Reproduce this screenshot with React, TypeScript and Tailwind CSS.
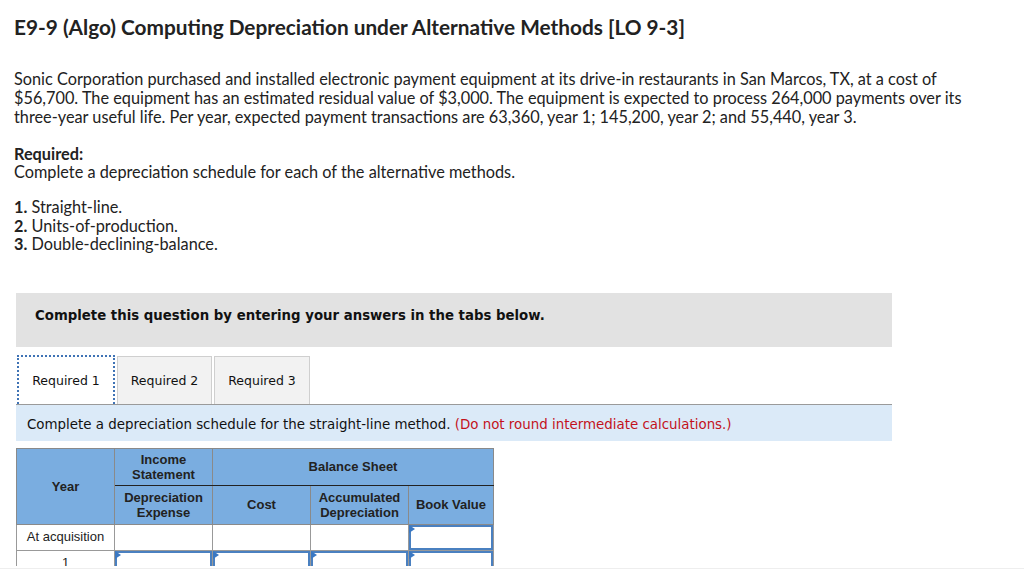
import React from "react";

const Tri = () => (
  <span className="absolute left-0 top-0 w-0 h-0 border-t-[4px] border-b-[4px] border-l-[6px] border-t-transparent border-b-transparent border-l-[#3a78c3]" />
);

const InputCell = () => (
  <td className="relative border border-[#999] p-0 h-[26px]">
    <div className="absolute inset-0 border-2 border-[#4a80c0]"></div>
    <Tri />
  </td>
);

export default function App() {
  const sans = { fontFamily: "Lato, 'Open Sans', sans-serif" };
  return (
    <div className="w-[1024px] h-[579px] bg-white overflow-hidden">
      <div className="h-[566px] overflow-hidden">
        <div className="pl-[14px] pt-[15px] text-[#222]" style={sans}>
          <h1 className="text-[20.8px] leading-[24px] font-bold text-[#222]">
            E9-9 (Algo) Computing Depreciation under Alternative Methods [LO 9-3]
          </h1>
          <p className="mt-[30px] text-[16.3px] leading-[19px] w-[972px]">
            Sonic Corporation purchased and installed electronic payment equipment at its drive-in restaurants in San Marcos, TX, at a cost of $56,700. The equipment has an estimated residual value of $3,000. The equipment is expected to process 264,000 payments over its three-year useful life. Per year, expected payment transactions are 63,360, year 1; 145,200, year 2; and 55,440, year 3.
          </p>
          <div className="mt-[19px] text-[16.3px] leading-[18px]">
            <div className="font-bold">Required:</div>
            <div>Complete a depreciation schedule for each of the alternative methods.</div>
          </div>
          <ol className="mt-[17px] text-[16.3px] leading-[18.5px]">
            <li><b>1.</b> Straight-line.</li>
            <li><b>2.</b> Units-of-production.</li>
            <li><b>3.</b> Double-declining-balance.</li>
          </ol>
        </div>

        <div className="ml-[16px] w-[876px] mt-[39px]" style={{ fontFamily: "'DejaVu Sans', Verdana, sans-serif" }}>
          <div className="h-[54px] bg-[#e2e2e2] pl-[19px] pt-[14px] text-[13.3px] leading-[18px] font-bold text-[#111]">
            Complete this question by entering your answers in the tabs below.
          </div>
          <div className="mt-[8px] flex items-end gap-[2px] pl-[1px]">
            <div className="h-[49px] w-[98px] bg-white border-2 border-dotted border-[#3f73b5] border-b-0 flex items-center justify-center pt-[2px] text-[12.5px] text-[#111]">
              Required 1
            </div>
            <div className="h-[48px] w-[95px] bg-[#f2f2f2] border border-[#cfcfcf] border-b-0 flex items-center justify-center pt-[2px] text-[12.5px] text-[#111]">
              Required 2
            </div>
            <div className="h-[48px] w-[96px] bg-[#f2f2f2] border border-[#cfcfcf] border-b-0 flex items-center justify-center pt-[2px] text-[12.5px] text-[#111]">
              Required 3
            </div>
          </div>
          <div className="h-[37px] bg-[#dbeaf8] border-t border-[#9a9a9a] pl-[11px] pt-[6px] flex items-center text-[13.4px] text-[#111]">
            <span>Complete a depreciation schedule for the straight-line method.&nbsp;</span>
            <span className="text-[#c3121c]">(Do not round intermediate calculations.)</span>
          </div>

          <table
            className="mt-[7px] border-collapse text-[13px] text-[#222]"
            style={{ fontFamily: "'Liberation Sans', Arial, sans-serif" }}
          >
            <colgroup>
              <col className="w-[98px]" />
              <col className="w-[98px]" />
              <col className="w-[98px]" />
              <col className="w-[98px]" />
              <col className="w-[85px]" />
            </colgroup>
            <thead>
              <tr className="h-[37px] bg-[#7aade0] font-bold">
                <th rowSpan={2} className="border border-[#8a8a8a] leading-[15px]">Year</th>
                <th className="border border-[#8a8a8a] border-b-[#222] leading-[15px] pt-[1px]">Income<br />Statement</th>
                <th colSpan={3} className="border border-[#8a8a8a] border-b-[#222] leading-[15px]">Balance Sheet</th>
              </tr>
              <tr className="h-[39px] bg-[#7aade0] font-bold">
                <th className="border border-[#8a8a8a] leading-[15px]">Depreciation<br />Expense</th>
                <th className="border border-[#8a8a8a] leading-[15px]">Cost</th>
                <th className="border border-[#8a8a8a] leading-[15px]">Accumulated<br />Depreciation</th>
                <th className="border border-[#8a8a8a] leading-[15px]">Book Value</th>
              </tr>
            </thead>
            <tbody>
              <tr className="h-[26px]">
                <td className="border border-[#999] text-center font-normal">At acquisition</td>
                <td className="border border-[#999]"></td>
                <td className="border border-[#999]"></td>
                <td className="border border-[#999]"></td>
                <InputCell />
              </tr>
              <tr className="h-[26px]">
                <td className="border border-[#999] text-center">1</td>
                <InputCell />
                <InputCell />
                <InputCell />
                <InputCell />
              </tr>
            </tbody>
          </table>
        </div>
      </div>
      <div className="h-[1px] bg-[#eeeeee] mt-[2px]" />
    </div>
  );
}
